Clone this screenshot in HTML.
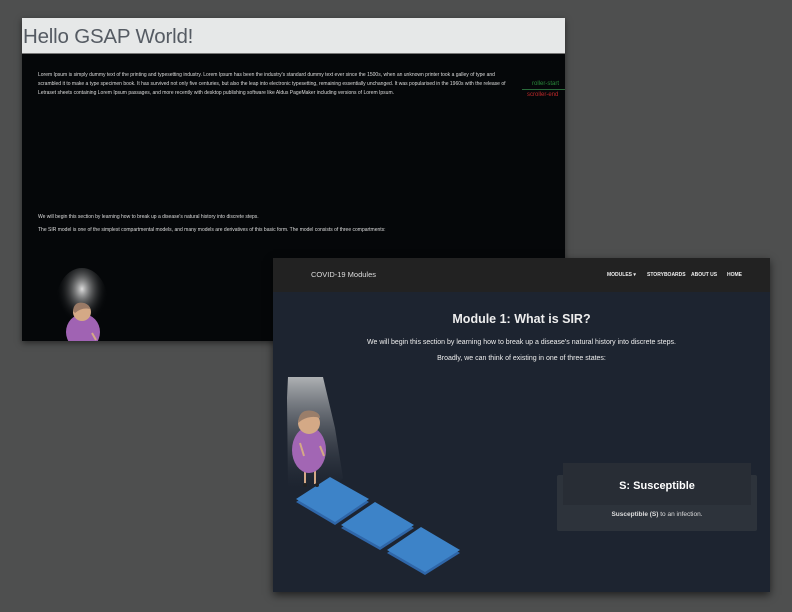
<!DOCTYPE html>
<html><head><meta charset="utf-8"><style>
body{margin:0;width:792px;height:612px;background:#4e4f4f;position:relative;overflow:hidden;font-family:"Liberation Sans",sans-serif}
.w1{position:absolute;left:22px;top:18px;width:543px;height:323px;background:#050709;box-shadow:0 2px 6px rgba(0,0,0,.5)}
.h1{height:35px;background:#e6e8e8;border-bottom:1px solid #777;font-size:20.5px;color:#555b63;line-height:37px;padding-left:1px;letter-spacing:-0.2px}
.p{position:absolute;left:16px;font-size:5px;color:#ddd;white-space:nowrap}
.w2{position:absolute;left:273px;top:258px;width:497px;height:334px;background:#1d2430;box-shadow:0 3px 8px rgba(0,0,0,.6)}
.nav{height:34px;background:#222;color:#ddd;position:relative}
.nav .b{position:absolute;left:38px;top:12px;font-size:7.5px}
.nav .m{position:absolute;top:14px;font-size:5px;font-weight:bold;color:#eee}
.c{position:absolute;width:100%;text-align:center;color:#eee}
</style></head><body>
<div class="w1"><div class="h1">Hello GSAP World!</div>
<div class="p" style="top:54px">Lorem Ipsum is simply dummy text of the printing and typesetting industry. Lorem Ipsum has been the industry's standard dummy text ever since the 1500s, when an unknown printer took a galley of type and</div>
<div class="p" style="top:63px">scrambled it to make a type specimen book. It has survived not only five centuries, but also the leap into electronic typesetting, remaining essentially unchanged. It was popularised in the 1960s with the release of</div>
<div class="p" style="top:72px">Letraset sheets containing Lorem Ipsum passages, and more recently with desktop publishing software like Aldus PageMaker including versions of Lorem Ipsum.</div>
<div class="p" style="left:510px;top:63px;color:#2a8a3a;background:#050709;font-size:6px">roller-start</div>
<div style="position:absolute;left:500px;top:71px;width:43px;height:1px;background:#2a6a3a"></div>
<div class="p" style="left:505px;top:74px;color:#c0282a;font-size:6px">scroller-end</div>
<div class="p" style="top:196px">We will begin this section by learning how to break up a disease's natural history into discrete steps.</div>
<div class="p" style="top:209px">The SIR model is one of the simplest compartmental models, and many models are derivatives of this basic form. The model consists of three compartments:</div>
<svg style="position:absolute;left:30px;top:250px" width="70" height="73">
<defs><radialGradient id="g" cx=".5" cy=".3" r=".5"><stop offset="0" stop-color="#ddd"/><stop offset="1" stop-color="#050709" stop-opacity="0"/></radialGradient></defs>
<ellipse cx="30" cy="35" rx="26" ry="35" fill="url(#g)"/>
<ellipse cx="31" cy="64" rx="17" ry="18" fill="#a063b3"/>
<circle cx="30" cy="44" r="9" fill="#d4a986"/><path d="M21 43 Q22 33 32 35 Q38 37 38 41 Q30 39 23 45Z" fill="#9a7a66"/>
<path d="M40 65 L44 72" stroke="#d4a986" stroke-width="2"/>
</svg>
</div>
<div class="w2"><div class="nav"><span class="b">COVID-19 Modules</span>
<span class="m" style="left:334px">MODULES ▾</span><span class="m" style="left:374px">STORYBOARDS</span><span class="m" style="left:418px">ABOUT US</span><span class="m" style="left:454px">HOME</span></div>
<div class="c" style="top:54px;font-size:12.5px;font-weight:bold">Module 1: What is SIR?</div>
<div class="c" style="top:81px;font-size:7px">We will begin this section by learning how to break up a disease's natural history into discrete steps.</div>
<div class="c" style="top:97px;font-size:7px">Broadly, we can think of existing in one of three states:</div>
<div style="position:absolute;left:284px;top:217px;width:200px;height:56px;background:#2d333b;border-radius:2px"></div>
<div style="position:absolute;left:290px;top:205px;width:188px;height:42px;background:#282d35;color:#fff;font-weight:bold;font-size:11px;text-align:center;line-height:46px">S: Susceptible</div>
<div style="position:absolute;left:284px;top:253px;width:200px;text-align:center;color:#ddd;font-size:6.5px"><b>Susceptible (S)</b> to an infection.</div>
<svg style="position:absolute;left:0;top:110px" width="200" height="224">
<defs><linearGradient id="s" x1="0" y1="0" x2="0" y2="1"><stop offset="0" stop-color="#aeb1b4"/><stop offset="1" stop-color="#1d2430" stop-opacity=".2"/></linearGradient></defs>
<path d="M15 9 L50 9 L62 60 L70 110 L60 120 L15 120 L14 30Z" fill="url(#s)"/>
<g fill="#2f66a8"><path d="M23 134 L57 112 L96 134 L62 157Z"/><path d="M68 160 L102 137 L141 160 L107 182Z"/><path d="M114 185 L148 162 L187 185 L152 207Z"/></g>
<g fill="#3d83c8"><path d="M23 131 L57 109 L96 131 L62 154Z"/><path d="M68 157 L102 134 L141 157 L107 179Z"/><path d="M114 182 L148 159 L187 182 L152 204Z"/></g>
<path d="M32 102 L32 116 M42 102 L42 116" stroke="#d4a986" stroke-width="2"/>
<ellipse cx="36" cy="82" rx="17" ry="23" fill="#a266b4"/>
<circle cx="36" cy="55" r="11" fill="#d4a986"/><path d="M25 55 Q26 40 40 43 Q47 45 47 50 Q38 47 29 52Z" fill="#9a7e6a"/>
<path d="M27 75 L31 88 M47 78 L51 88" stroke="#d4a986" stroke-width="2"/>
<circle cx="32" cy="117" r="2" fill="#222"/><circle cx="44" cy="117" r="2" fill="#222"/>
</svg>
</div>
</body></html>
